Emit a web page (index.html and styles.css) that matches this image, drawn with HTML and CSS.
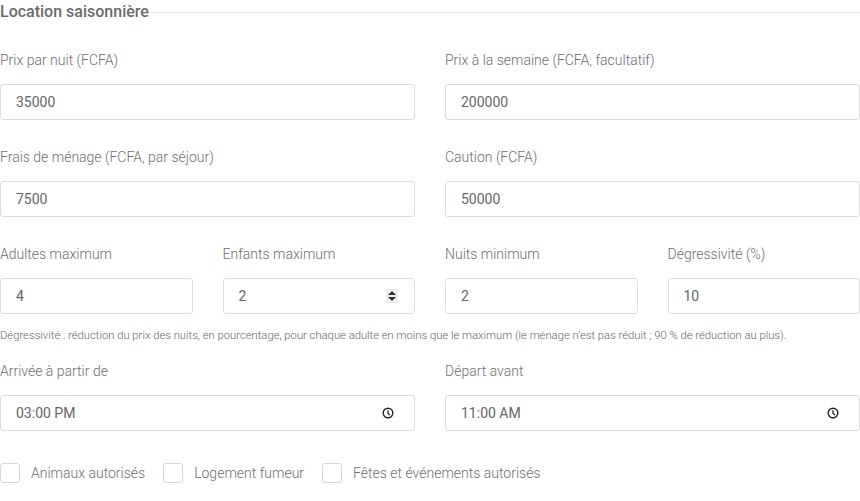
FILE: index.html
```html
<!DOCTYPE html>
<html lang="fr">
<head>
<meta charset="utf-8">
<title>Location saisonnière</title>
<link rel="stylesheet" href="styles.css">
</head>
<body>
<section class="section">
  <h2 class="section-title"><span>Location saisonnière</span></h2>

  <div class="grid grid-2 first">
    <div class="field">
      <label class="label">Prix par nuit (FCFA)</label>
      <input class="input" type="text" value="35000">
    </div>
    <div class="field">
      <label class="label">Prix à la semaine (FCFA, facultatif)</label>
      <input class="input" type="text" value="200000">
    </div>
    <div class="field">
      <label class="label">Frais de ménage (FCFA, par séjour)</label>
      <input class="input" type="text" value="7500">
    </div>
    <div class="field">
      <label class="label">Caution (FCFA)</label>
      <input class="input" type="text" value="50000">
    </div>
  </div>

  <div class="grid grid-4">
    <div class="field">
      <label class="label">Adultes maximum</label>
      <input class="input" type="text" value="4">
    </div>
    <div class="field">
      <label class="label">Enfants maximum</label>
      <div class="input-wrap">
        <input class="input" type="text" value="2">
        <span class="spinner">
          <svg width="8" height="12" viewBox="0 0 8 12"><path d="M4 1 L8 5 H0 Z M4 11 L0 7 H8 Z" fill="#333"/></svg>
        </span>
      </div>
    </div>
    <div class="field">
      <label class="label">Nuits minimum</label>
      <input class="input" type="text" value="2">
    </div>
    <div class="field">
      <label class="label">Dégressivité (%)</label>
      <input class="input" type="text" value="10">
    </div>
  </div>

  <p class="help">Dégressivité : réduction du prix des nuits, en pourcentage, pour chaque adulte en moins que le maximum (le ménage n’est pas réduit ; 90 % de réduction au plus).</p>

  <div class="grid grid-2">
    <div class="field">
      <label class="label">Arrivée à partir de</label>
      <div class="input-wrap">
        <input class="input" type="text" value="03:00 PM">
        <span class="clock">
          <svg width="12" height="12" viewBox="0 0 12 12"><circle cx="6" cy="6" r="4.8" fill="none" stroke="#222" stroke-width="1.4"/><path d="M6 3.3 V6.2 L7.8 8" fill="none" stroke="#222" stroke-width="1.3"/></svg>
        </span>
      </div>
    </div>
    <div class="field">
      <label class="label">Départ avant</label>
      <div class="input-wrap">
        <input class="input" type="text" value="11:00 AM">
        <span class="clock">
          <svg width="12" height="12" viewBox="0 0 12 12"><circle cx="6" cy="6" r="4.8" fill="none" stroke="#222" stroke-width="1.4"/><path d="M6 3.3 V6.2 L7.8 8" fill="none" stroke="#222" stroke-width="1.3"/></svg>
        </span>
      </div>
    </div>
  </div>

  <div class="checks">
    <label class="check"><input type="checkbox" class="box"><span>Animaux autorisés</span></label>
    <label class="check"><input type="checkbox" class="box"><span>Logement fumeur</span></label>
    <label class="check"><input type="checkbox" class="box"><span>Fêtes et événements autorisés</span></label>
  </div>
</section>
</body>
</html>
```

FILE: styles.css
```css
html, body {
  margin: 0;
  padding: 0;
  background: #ffffff;
}

body {
  font-family: Roboto, "Liberation Sans", sans-serif;
  color: #555;
  width: 860px;
}

.section {
  margin: 0;
  padding: 0;
}

.section-title {
  margin: 0;
  display: flex;
  align-items: center;
  font-size: 16px;
  font-weight: 500;
  color: #6b6b6b;
  line-height: 24px;
}

.section-title::after {
  content: "";
  flex: 1;
  border-top: 1px solid #e6e6e6;
  margin-top: 1px;
}

.grid {
  display: grid;
  column-gap: 30px;
}

.grid-2 {
  grid-template-columns: 1fr 1fr;
}

.grid-4 {
  grid-template-columns: 1fr 1fr 1fr 1fr;
}

.first {
  margin-top: 26px;
}

.field {
  display: flex;
  flex-direction: column;
  margin-bottom: 27px;
}

.grid-4 .field {
  margin-bottom: 0;
}

.label {
  font-size: 14px;
  font-weight: 300;
  line-height: 20px;
  color: #6e6e6e;
  margin-bottom: 14px;
}

.input-wrap {
  position: relative;
}

.input {
  box-sizing: border-box;
  width: 100%;
  height: 36px;
  border: 1px solid #dcdcdc;
  border-radius: 3px;
  padding: 0 15px;
  font-family: Roboto, "Liberation Sans", sans-serif;
  font-size: 14px;
  font-weight: 400;
  color: #666;
  background: #fff;
  outline: none;
}

.spinner {
  position: absolute;
  right: 17px;
  top: 11px;
  width: 12px;
  height: 14px;
  background: #ececec;
  display: flex;
  align-items: center;
  justify-content: center;
}

.clock {
  position: absolute;
  right: 21px;
  top: 12px;
  width: 12px;
  height: 12px;
  display: flex;
}

.help {
  margin: 14px 0 17px;
  font-size: 11.25px;
  font-weight: 300;
  line-height: 16px;
  color: #666;
}

.checks {
  display: flex;
  align-items: center;
  gap: 18px;
  margin-top: 5px;
}

.check {
  display: flex;
  align-items: center;
  gap: 11px;
  font-size: 14px;
  font-weight: 300;
  color: #6e6e6e;
  line-height: 20px;
}

.box {
  appearance: none;
  -webkit-appearance: none;
  margin: 0;
  width: 20px;
  height: 20px;
  border: 1px solid #d6d6d6;
  border-radius: 3px;
  background: #fff;
}
```
